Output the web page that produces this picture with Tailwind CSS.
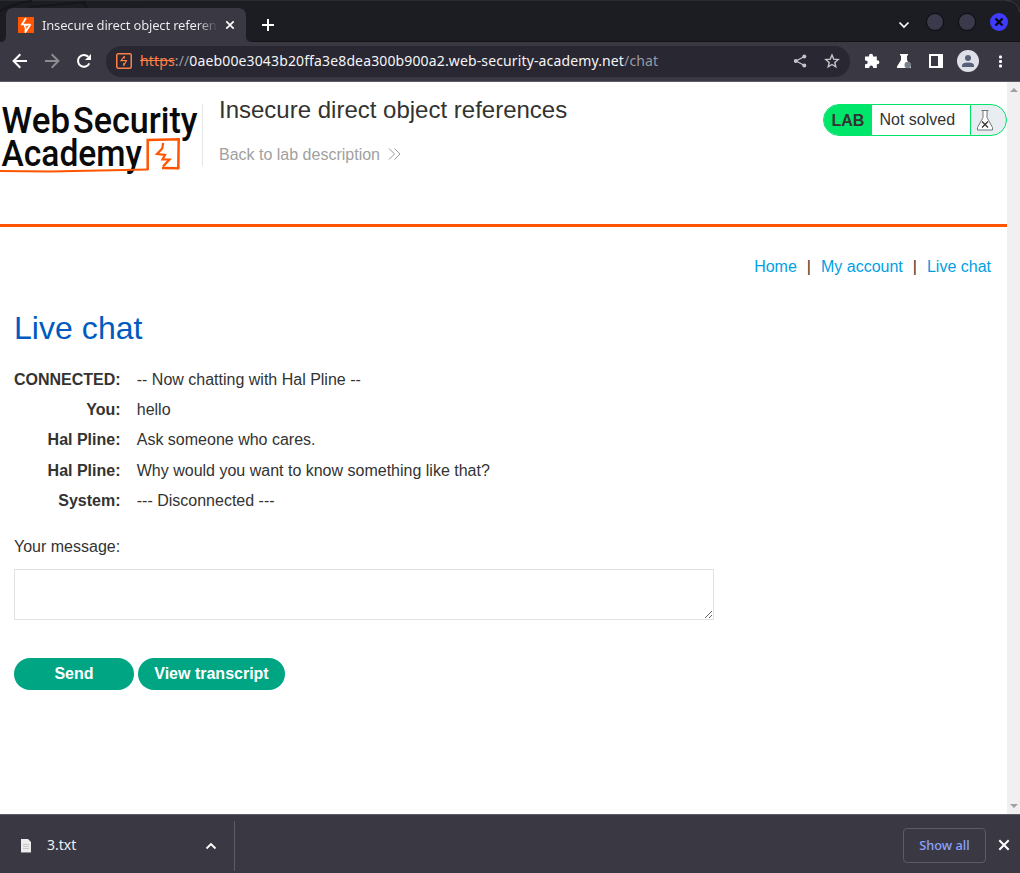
<!DOCTYPE html>
<html lang="en">
<head>
<meta charset="utf-8">
<title>Insecure direct object references</title>
<script src="https://cdn.jsdelivr.net/npm/@tailwindcss/browser@4"></script>
</head>
<body class="flex h-[873px] w-[1020px] flex-col overflow-hidden bg-white font-['Liberation_Sans',Arial,sans-serif] text-[16px] text-[#333332]">

<!-- Tab strip -->
<div class="relative flex h-[42px] shrink-0 items-start border-t border-[#2a2a33] bg-[#1c1c23] font-['Noto_Sans',sans-serif]">
  <svg class="absolute left-0 -top-px" width="1020" height="42" viewBox="0 0 1020 42" fill="none">
    <path d="M0 11Q14 3 32 1M28 7L86 2M82 1l6 8" stroke="#15151b" stroke-width="2"/>
    <path d="M120 9Q180 9 250 16" stroke="#191920" stroke-width="3"/>
    <path d="M0 42q6 0 6-6V16q0-8 8-8h224q8 0 8 8v20q0 6 6 6z" fill="#3a3943"/>
    <path d="M252 41.500H1020" stroke="#121217"/>
    <path d="M1006 0.500Q1018 1 1019.500 12" stroke="#3b3b44"/>
    <path d="M1010 0h10v9q-2-7-10-9z" fill="#222227"/>
  </svg>
  <div class="relative ml-[18px] mt-[7px] flex h-[34px] w-[228px] items-center">
    <svg width="16" height="16" viewBox="0 0 16 16"><path d="M0 0h16v16H0z" fill="#ff5500"/><path d="M8 1L4 7.500h5.500L6 9.500M9.500 7.500l2.500.5-4.500 7V10" fill="none" stroke="#fff" stroke-width="1.700"/></svg>
    <div class="ml-2 w-[176px] overflow-hidden bg-linear-to-r from-[#f1f1f3] from-88% to-transparent bg-clip-text text-[13px] leading-5 tracking-[-0.170px] whitespace-nowrap text-transparent">Insecure direct object referen</div>
    <svg class="ml-[7px]" width="10" height="10" viewBox="0 0 10 10" stroke="#fff" stroke-width="1.700"><path d="M1.300 1.300l7.400 7.400M8.700 1.300l-7.400 7.400"/></svg>
  </div>
  <svg class="relative mt-[17px] ml-[15px]" width="14" height="14" viewBox="0 0 14 14" stroke="#fff" stroke-width="2"><path d="M7 1v12M1 7h12"/></svg>
  <svg class="relative mt-[11px] ml-auto mr-3" width="112" height="20" viewBox="0 0 112 20">
    <path d="M3.500 10.500l4.500 4.500 4.500-4.500" fill="none" stroke="#fff" stroke-width="1.700"/>
    <circle cx="39" cy="10" r="8.500" fill="#3a3a4c" stroke="#0b0b10"/>
    <circle cx="71" cy="10" r="8.500" fill="#3a3a4c" stroke="#0b0b10"/>
    <circle cx="103" cy="10" r="9" fill="#3f3cff"/>
    <path d="M99.500 6.500l7 7M106.500 6.500l-7 7" stroke="#08080e" stroke-width="2.400"/>
  </svg>
</div>

<!-- Toolbar -->
<div class="flex h-10 shrink-0 items-center border-b border-[#5c5b66] bg-[#3a3943] pb-px font-['Noto_Sans',sans-serif]">
  <div class="flex w-[106px] shrink-0 gap-3 pl-[10px]">
    <svg width="20" height="20" viewBox="0 0 20 20" fill="none" stroke="#fff" stroke-width="2"><path d="M17 10H4M10.300 3.300L3.600 10l6.700 6.700"/></svg>
    <svg width="20" height="20" viewBox="0 0 20 20" fill="none" stroke="#8d8c93" stroke-width="2"><path d="M3 10h13M9.700 3.300l6.700 6.700-6.700 6.700"/></svg>
    <svg width="20" height="20" viewBox="0 0 20 20" fill="none" stroke="#fff" stroke-width="2"><path d="M15.300 12.300A5.900 5.900 0 1 1 14.200 5.800"/><path d="M17 3v6h-6z" fill="#fff" stroke="none"/></svg>
  </div>
  <div class="flex h-[31px] w-[744px] shrink-0 items-center rounded-full bg-[#282732] pl-[9px] pr-[9px]">
    <svg width="18" height="18" viewBox="0 0 18 18" fill="none" stroke="#ff7f45"><rect x="1.750" y="1.750" width="14.500" height="14.500" rx="1.500" stroke-width="1.500"/><path d="M9.500 4L6 8.700h5.500L8.500 14M9.300 4v2.500M8.700 11v3" stroke-width="1.200"/></svg>
    <div class="-mt-px ml-[7px] text-[14px] leading-5 tracking-[0.135px] whitespace-nowrap text-[#9a9aa1]"><span class="text-[#ff7f45] line-through">https</span>://<span class="text-[#f5f5f7]">0aeb00e3043b20ffa3e8dea300b900a2.web-security-academy.net</span>/chat</div>
    <svg class="ml-auto" width="16" height="16" viewBox="0 0 16 16" fill="#c5c5c9" stroke="#c5c5c9"><path d="M12.500 3.500L4 8l8.500 4.500" fill="none" stroke-width="1.300"/><g stroke="none"><circle cx="12.300" cy="3.500" r="2"/><circle cx="3.800" cy="8" r="2"/><circle cx="12.300" cy="12.500" r="2"/></g></svg>
    <svg class="ml-4 mr-px" width="16" height="16" viewBox="0 0 16 16" fill="none" stroke="#c5c5c9" stroke-width="1.400"><path d="M8 2l1.700 4.100 4.500.4-3.400 2.900 1 4.400L8 11.500l-3.800 2.300 1-4.400-3.400-2.900 4.500-.4z"/></svg>
  </div>
  <svg class="ml-3 shrink-0" width="158" height="24" viewBox="0 0 158 24" fill="#fff">
    <path d="M3 7.500h4V6.700a2 2 0 0 1 4 0v.8h3.800v3.800h.6a2 2 0 0 1 0 4h-.6V19h-3.700v-.7a1.900 1.900 0 0 0-3.800 0v.7H3v-3.800h.8a1.900 1.900 0 0 0 0-3.800H3z"/>
    <path d="M38 5h8v1.500h-1V11l4 6.500q.5 1.500-1 1.500H36q-1.700 0-1-1.500l4-6.500V6.500h-1z"/>
    <circle cx="45.800" cy="16" r="3.300" fill="#79808a"/>
    <path fill-rule="evenodd" d="M67 5h14v14H67zM69 7v10h7V7z"/>
    <circle cx="106" cy="12" r="11" fill="#dfe0e7"/>
    <circle cx="106" cy="9" r="3" fill="#566079"/><path d="M100 18v-1.500q0-3 6-3t6 3V18z" fill="#566079"/>
    <rect x="137" y="6.500" width="3" height="3" rx="1"/><rect x="137" y="11" width="3" height="3" rx="1"/><rect x="137" y="15.500" width="3" height="3" rx="1"/>
  </svg>
</div>

<!-- Viewport -->
<div class="flex min-h-0 flex-1">
  <main class="w-[1007px] shrink-0">
    <header class="flex h-[145px] border-b-3 border-[#ff5500]">
      <svg class="shrink-0" width="203" height="100" viewBox="0 0 203 100">
        <g font-family="Roboto, sans-serif" font-size="37.500" font-weight="500" fill="#0a0a0a">
          <text x="1.500" y="50.700" textLength="68.500" lengthAdjust="spacingAndGlyphs">Web</text>
          <text x="73" y="50.700" textLength="124.500" lengthAdjust="spacingAndGlyphs">Security</text>
          <text x="1.500" y="83.500" textLength="140.500" lengthAdjust="spacingAndGlyphs">Academy</text>
        </g>
        <g fill="none" stroke="#ff5500">
          <path d="M0 89L50 89.500l98-2" stroke-width="2"/>
          <path d="M147.700 88V58l31-.7-.4 29-16.300-.3" stroke-width="2.500"/>
          <path d="M163.200 61l-1 5.500-5.200 5.500 8 1-2.500 4.500h7L163 84.500" stroke-width="2.200"/>
        </g>
        <path d="M202.500 22v62" stroke="#e5e5e5"/>
      </svg>
      <div class="ml-4 pt-3">
        <h2 class="text-[24px] leading-8">Insecure direct object references</h2>
        <a class="mt-[17px] flex items-center leading-6 text-[#a0a0a0]">Back to lab description
          <svg class="-mt-[2px] ml-2" width="13" height="12" viewBox="0 0 13 12" fill="none" stroke="#999"><path d="M1 .5L6.500 6 1 11.500M6.500.5L12 6 6.500 11.500"/></svg>
        </a>
      </div>
      <div class="mt-[22px] ml-auto flex h-8 w-[184px] overflow-hidden rounded-full border border-[#00e66b] bg-[#e7edf0]">
        <div class="w-12 bg-[#00e66b] pl-[7.500px] font-bold leading-[31px]">LAB</div>
        <div class="w-[99px] border-r border-[#00e66b] bg-white pl-[7.500px] leading-[29px]">Not solved</div>
        <svg class="ml-[5px] mt-[5px]" width="18" height="21" viewBox="0 0 18 21" fill="#fff" stroke="#777"><path d="M5.500 .5h7M7 .5v7l-5.500 10v2.500h15v-2.500l-5.500-10v-7"/><path d="M6 11.500l6 6M12 11.500l-6 6" stroke="#333" stroke-width="1.300"/></svg>
      </div>
    </header>

    <nav class="mt-[28px] flex justify-end gap-[10px] pr-4 leading-6 text-[#009fe3]">
      <a>Home</a><span class="text-[#333332]">|</span><a>My account</a><span class="text-[#333332]">|</span><a>Live chat</a>
    </nav>

    <section class="px-[14px]">
      <h1 class="mt-[29px] text-[32px] leading-10 tracking-[0.050px] text-[#005bbf]">Live chat</h1>
      <div class="mt-[17px] grid grid-cols-[106.500px_1fr] gap-x-[16.250px] leading-[30.200px]">
        <b class="text-right">CONNECTED:</b><span>-- Now chatting with Hal Pline --</span>
        <b class="text-right">You:</b><span>hello</span>
        <b class="text-right">Hal Pline:</b><span>Ask someone who cares.</span>
        <b class="text-right">Hal Pline:</b><span>Why would you want to know something like that?</span>
        <b class="text-right">System:</b><span>--- Disconnected ---</span>
      </div>
      <label class="mt-[19.250px] block leading-6">Your message:</label>
      <textarea class="mt-[10px] block h-[51px] w-[700px] resize border border-[#e2e2e2] bg-white"></textarea>
      <div class="mt-[38px] flex gap-1 font-bold text-white">
        <button class="h-8 w-[120px] rounded-full bg-[#00a584]">Send</button>
        <button class="h-8 w-[147px] rounded-full bg-[#00a584]">View transcript</button>
      </div>
    </section>
  </main>
  <div class="flex flex-1 flex-col items-center justify-between bg-[#f0f0f0] pt-[6px] pb-[6px] pl-px">
    <svg width="8" height="4" viewBox="0 0 8 4" fill="#a0a0a0"><path d="M0 4l4-4 4 4z"/></svg>
    <svg width="8" height="4" viewBox="0 0 8 4" fill="#a0a0a0"><path d="M0 0l4 4 4-4z"/></svg>
  </div>
</div>

<!-- Download shelf -->
<footer class="flex h-[59px] shrink-0 items-center border-t border-[#5c5b66] bg-[#3a3943] font-['Noto_Sans',sans-serif]">
  <div class="mt-[3px] flex h-[50px] w-[235px] items-center border-r border-[#5c5b66] pl-[21px]">
    <svg width="10" height="14" viewBox="0 0 10 14"><path d="M0 0h7l3 3v11H0z" fill="#ececec"/><path d="M2 5.500h6M2 7.500h6M2 9.500h6" stroke="#c8c8c8"/><path d="M0 13.500h10" stroke="#8d8d8d"/></svg>
    <span class="-mt-px ml-4 text-[14px] leading-5 text-[#f0f0f2]">3.txt</span>
    <svg class="ml-auto mr-[17px]" width="12" height="8" viewBox="0 0 12 8" fill="none" stroke="#fff" stroke-width="1.800"><path d="M1.500 6.500L6 2l4.500 4.500"/></svg>
  </div>
  <button class="ml-auto mt-[3px] h-[35px] w-[83px] rounded-[4px] border border-[#5c5b66] text-[12.750px] font-medium text-[#8ba2ff]">Show all</button>
  <svg class="mt-px mr-[10px] ml-[12px]" width="12" height="12" viewBox="0 0 12 12" stroke="#fff" stroke-width="2"><path d="M1.300 1.300l9.400 9.400M10.700 1.300l-9.400 9.400"/></svg>
</footer>
</body>
</html>
